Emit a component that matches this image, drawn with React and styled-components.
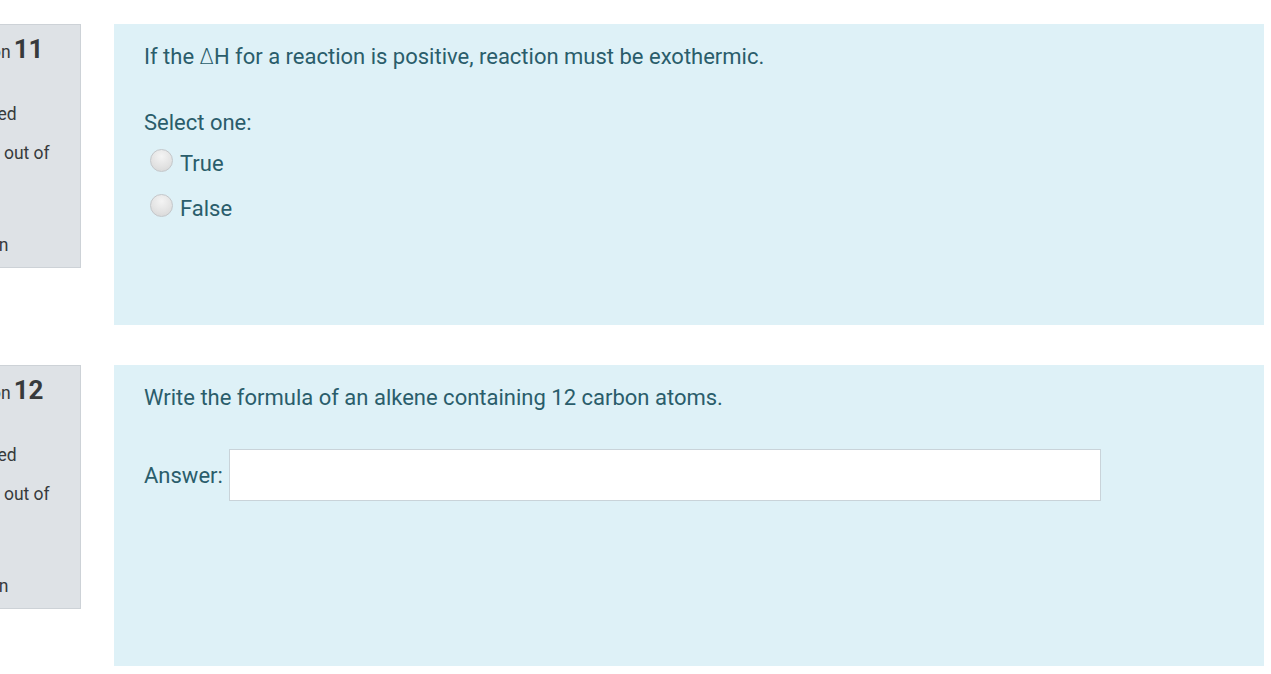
import React from "react";
import styled, { createGlobalStyle } from "styled-components";

const GlobalStyle = createGlobalStyle`
  html, body {
    margin: 0;
    padding: 0;
    background: #ffffff;
  }
  body {
    font-family: Roboto, "Liberation Sans", sans-serif;
  }
`;

const Page = styled.div`
  width: 1271px;
  height: 674px;
  overflow: hidden;
  padding-top: 24px;
  box-sizing: border-box;
  display: flex;
  flex-direction: column;
  gap: 40px;
`;

const QuestionRow = styled.div`
  display: flex;
  align-items: flex-start;
  gap: 33px;
`;

const Info = styled.div`
  flex: 0 0 151px;
  margin-left: -70px;
  height: 244px;
  box-sizing: border-box;
  padding: 7px 10px 0 10px;
  background: #dee2e6;
  border: 1px solid #cdd2d7;
  color: #373a3c;
  font-size: 17.5px;
  line-height: 39px;
`;

const QNo = styled.h3`
  margin: 0 0 -13px;
  font-weight: 400;
  font-size: 17.5px;
  line-height: 34px;
  span {
    font-weight: 700;
    font-size: 26px;
    margin-left: 3px;
  }
`;

const Flag = styled.div`
  max-width: 96px;
  line-height: 22px;
  svg {
    vertical-align: -2px;
    margin-right: 6px;
  }
`;

const Content = styled.div`
  width: 1150px;
  height: 301px;
  box-sizing: border-box;
  padding: 20px 30px;
  background: #def1f7;
  color: #2a5d6b;
  font-size: 22px;
`;

const Text = styled.p`
  margin: 0;
  line-height: 26px;
`;

const Delta = styled.span`
  font-family: "DejaVu Sans", sans-serif;
  font-weight: 200;
  font-size: 21px;
`;

const Prompt = styled.div`
  margin-top: 40px;
  line-height: 26px;
`;

const Options = styled.div`
  margin-top: 15px;
  display: flex;
  flex-direction: column;
  gap: 19px;
  padding-left: 6px;
`;

const Option = styled.label`
  display: flex;
  align-items: center;
  gap: 7px;
  line-height: 26px;
`;

const Radio = styled.span`
  width: 23px;
  height: 23px;
  box-sizing: border-box;
  border-radius: 50%;
  border: 1px solid #c4c7ca;
  background: radial-gradient(circle at 50% 30%, #f4f4f4 0%, #e2e2e2 60%, #d4d4d4 100%);
  margin-top: -8px;
`;

const AnswerRow = styled.div`
  margin-top: 38px;
  display: flex;
  align-items: center;
  gap: 6px;
`;

const AnswerInput = styled.div`
  width: 872px;
  height: 52px;
  box-sizing: border-box;
  background: #ffffff;
  border: 1px solid #c9d3d9;
`;

function FlagIcon() {
  return (
    <svg width="16" height="16" viewBox="0 0 16 16">
      <path d="M3 1v14M3 2h9l-2 3 2 3H3" fill="none" stroke="#666" strokeWidth="1.5" />
    </svg>
  );
}

function QuestionInfo({ number }) {
  return (
    <Info>
      <QNo>
        Question<span>{number}</span>
      </QNo>
      <div>Not yet answered</div>
      <div>Marked out of 1.00</div>
      <Flag>
        <FlagIcon />
        Flag question
      </Flag>
    </Info>
  );
}

export default function App() {
  return (
    <>
      <GlobalStyle />
      <Page>
        <QuestionRow>
          <QuestionInfo number="11" />
          <Content>
            <Text>
              If the <Delta>Δ</Delta>H for a reaction is positive, reaction must be exothermic.
            </Text>
            <Prompt>Select one:</Prompt>
            <Options>
              <Option>
                <Radio />
                True
              </Option>
              <Option>
                <Radio />
                False
              </Option>
            </Options>
          </Content>
        </QuestionRow>
        <QuestionRow>
          <QuestionInfo number="12" />
          <Content>
            <Text>Write the formula of an alkene containing 12 carbon atoms.</Text>
            <AnswerRow>
              <span>Answer:</span>
              <AnswerInput />
            </AnswerRow>
          </Content>
        </QuestionRow>
      </Page>
    </>
  );
}
